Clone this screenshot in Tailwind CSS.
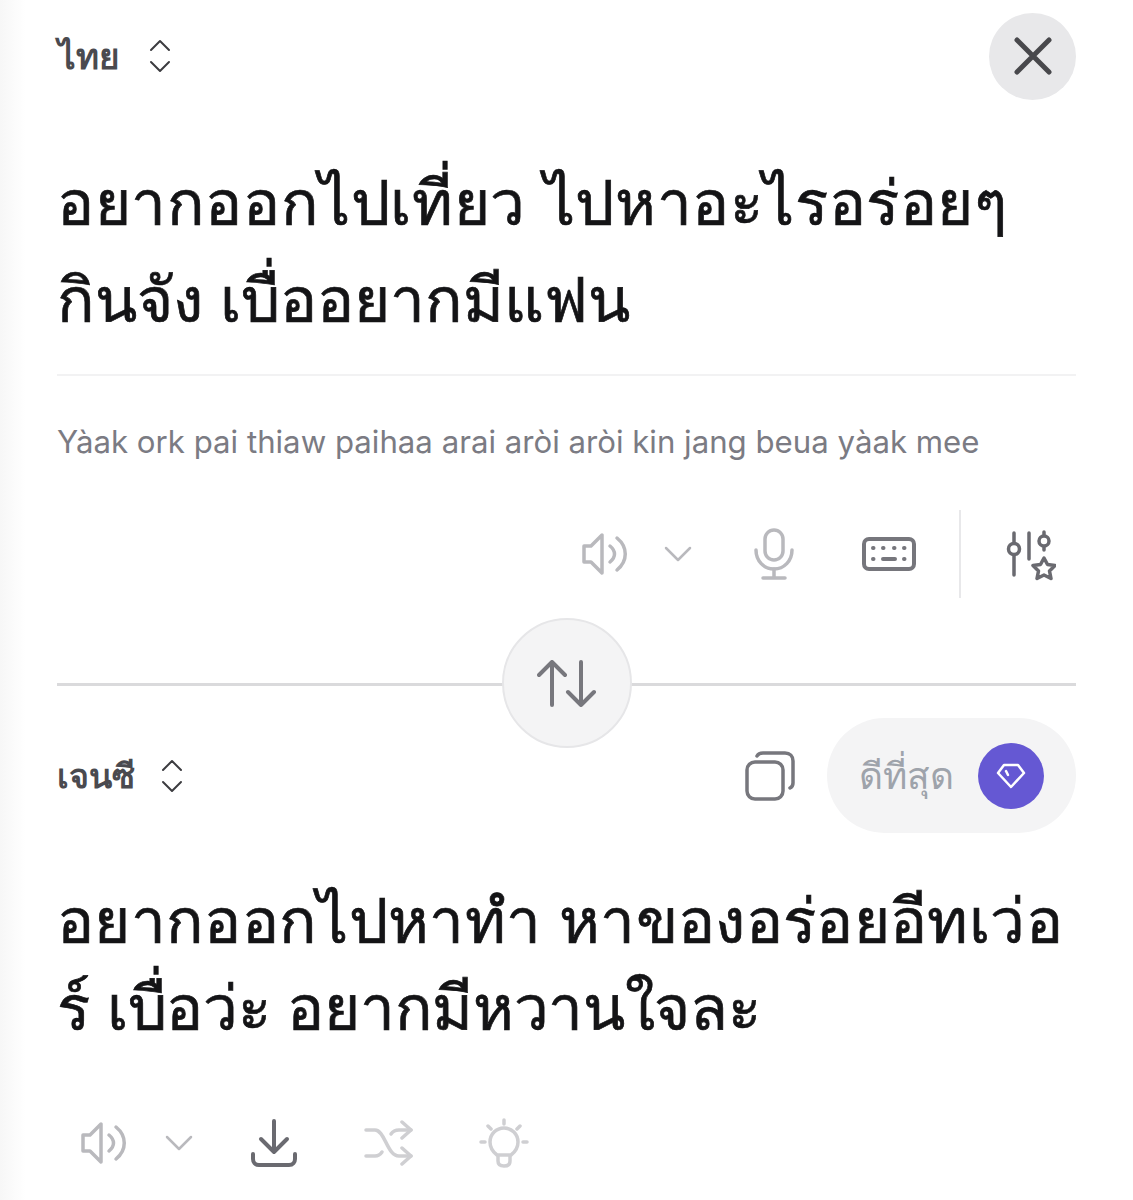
<!DOCTYPE html>
<html lang="th">
<head>
  <meta charset="UTF-8" />
  <title>Translate</title>
  <script src="https://cdn.jsdelivr.net/npm/@tailwindcss/browser@4"></script>
</head>
<body class="bg-white h-[1200px] overflow-hidden font-['Inter','Noto_Sans','DejaVu_Sans',sans-serif]">
<div class="h-[1200px] pl-[57px] pr-[57px] bg-gradient-to-r from-[#f7f7f7] to-white to-[26px]">

  <!-- Source header -->
  <div class="h-[112px] flex items-center justify-between">
    <div class="flex items-center gap-[29px]">
      <span class="ml-[1px] text-[35px] font-bold text-[#4a4a4f]">ไทย</span>
      <svg class="w-[22px] h-[36px] text-[#3c3c40]" viewBox="0 0 22 36" fill="none" stroke="currentColor" stroke-width="2" stroke-linecap="round" stroke-linejoin="round"><path d="M2 12l9-9 9 9"/><path d="M2 24l9 9 9-9"/></svg>
    </div>
    <button class="w-[87px] h-[87px] rounded-full bg-[#e8e8ea] flex items-center justify-center">
      <svg class="w-[38px] h-[38px] text-[#48484c]" viewBox="0 0 38 38" fill="none" stroke="currentColor" stroke-width="5" stroke-linecap="round"><path d="M3 3l32 32M35 3L3 35"/></svg>
    </button>
  </div>

  <!-- Source text -->
  <div class="pt-[42px] h-[264px] border-b-2 border-[#f2f2f3]">
    <p class="text-[62px] leading-[97px] text-[#141416] whitespace-nowrap [-webkit-text-stroke:0.7px_#141416]"><span class="block tracking-[0.6px]">อยากออกไปเที่ยว ไปหาอะไรอร่อยๆ</span><span class="block">กินจัง เบื่ออยากมีแฟน</span></p>
  </div>
  <p class="mt-[46px] text-[31.2px] leading-[40px] text-[#7b7b83] whitespace-nowrap">Yàak ork pai thiaw paihaa arai aròi aròi kin jang beua yàak mee</p>

  <!-- Source toolbar -->
  <div class="mt-[48px] h-[88px] flex items-center justify-end">
    <svg class="w-[46px] h-[46px] text-[#b9b9bd]" viewBox="0 0 46 46" fill="none" stroke="currentColor" stroke-width="3.5" stroke-linecap="round" stroke-linejoin="round"><path d="M21 4v38L10 31H3V15h7z"/><path d="M29 15c6 5 6 11 0 16"/><path d="M36 7c11 9 11 23 0 32"/></svg>
    <svg class="ml-[37px] w-[28px] h-[16px] text-[#b9b9bd]" viewBox="0 0 28 16" fill="none" stroke="currentColor" stroke-width="2.5" stroke-linecap="round" stroke-linejoin="round"><path d="M2 2l12 12L26 2"/></svg>
    <svg class="ml-[62px] w-[40px] h-[52px] text-[#b9b9bd]" viewBox="0 0 40 52" fill="none" stroke="currentColor" stroke-width="3.5" stroke-linecap="round" stroke-linejoin="round"><rect x="11" y="2" width="18" height="30" rx="9"/><path d="M2 22c0 11 8 19 18 19s18-8 18-19"/><path d="M20 41v9M9 50h22"/></svg>
    <svg class="ml-[68px] w-[54px] h-[34px] text-[#76767c]" viewBox="0 0 54 34" fill="none" stroke="currentColor" stroke-width="4" stroke-linecap="round"><rect x="2" y="2" width="50" height="30" rx="5"/><path d="M11 11h.5M21 11h.5M32 11h.5M42 11h.5M11 22h.5M42 22h.5M21 22h12"/></svg>
    <div class="ml-[43px] w-[2px] h-[88px] bg-[#e8e8ea]"></div>
    <svg class="ml-[45px] mr-[20px] w-[50px] h-[54px] text-[#6a6a70]" viewBox="0 0 50 54" fill="none" stroke="currentColor" stroke-width="3.5" stroke-linecap="round" stroke-linejoin="round"><path d="M8 6v10M8 28v20M23 6v26M38 5v3M38 20v3"/><circle cx="8" cy="22" r="5.5"/><circle cx="38" cy="14" r="5"/><path d="M38 31l3.500 6.500 7.500 1-5.500 5.500 1.500 7.500-7-3.500-7 3.500 1.500-7.500-5.500-5.500 7.500-1z"/></svg>
  </div>

  <!-- Swap divider -->
  <div class="relative mt-[85px] h-[3px] bg-[#dadadc]">
    <button class="absolute left-[445px] top-[-65px] w-[130px] h-[130px] rounded-full bg-[#f4f4f5] border-2 border-[#e6e6e8] flex items-center justify-center">
      <svg class="w-[60px] h-[47px] text-[#77777d]" viewBox="0 0 60 47" fill="none" stroke="currentColor" stroke-width="4" stroke-linecap="round" stroke-linejoin="round"><path d="M15 2v43M2 15L15 2l13 13"/><path d="M44 2v43M31 32l13 13 13-13"/></svg>
    </button>
  </div>

  <!-- Target header -->
  <div class="mt-[32px] h-[115px] flex items-center justify-between">
    <div class="flex items-center gap-[26px]">
      <span class="text-[34px] font-bold text-[#4a4a4f]">เจนซี</span>
      <svg class="w-[22px] h-[36px] text-[#3c3c40]" viewBox="0 0 22 36" fill="none" stroke="currentColor" stroke-width="2" stroke-linecap="round" stroke-linejoin="round"><path d="M2 12l9-9 9 9"/><path d="M2 24l9 9 9-9"/></svg>
    </div>
    <div class="flex items-center gap-[32px]">
      <svg class="w-[50px] h-[50px] text-[#77777d]" viewBox="0 0 50 50" fill="none" stroke="currentColor" stroke-width="3.5" stroke-linecap="round" stroke-linejoin="round"><rect x="2" y="11" width="36" height="37" rx="8"/><path d="M12 5c1-2 3-3 6-3h22c5 0 8 3 8 8v22c0 2-1 4-3 5"/></svg>
      <div class="w-[249px] h-[115px] rounded-full bg-[#f4f4f5] flex items-center justify-end pr-[32px] gap-[24px]">
        <span class="text-[37px] font-medium text-[#9ea3ab]">ดีที่สุด</span>
        <span class="w-[66px] h-[66px] rounded-full bg-[#6558d3] flex items-center justify-center">
          <svg class="w-[30px] h-[26px] text-white" viewBox="0 0 30 26" fill="none" stroke="currentColor" stroke-width="2.5" stroke-linecap="round" stroke-linejoin="round"><path d="M8 2h14l6 8-13 14L2 10z"/><path d="M10 8l2 4"/></svg>
        </span>
      </div>
    </div>
  </div>

  <!-- Target text -->
  <p class="mt-[44px] text-[62px] leading-[87px] text-[#141416] whitespace-nowrap [-webkit-text-stroke:0.7px_#141416]"><span class="block tracking-[0.35px]">อยากออกไปหาทำ หาของอร่อยอีทเว่อ</span><span class="block tracking-[-0.3px]">ร์ เบื่อว่ะ อยากมีหวานใจละ</span></p>

  <!-- Target toolbar -->
  <div class="mt-[67px] flex items-center">
    <svg class="ml-[23px] w-[46px] h-[46px] text-[#b9b9bd]" viewBox="0 0 46 46" fill="none" stroke="currentColor" stroke-width="3.5" stroke-linecap="round" stroke-linejoin="round"><path d="M21 4v38L10 31H3V15h7z"/><path d="M29 15c6 5 6 11 0 16"/><path d="M36 7c11 9 11 23 0 32"/></svg>
    <svg class="ml-[39px] w-[28px] h-[16px] text-[#b9b9bd]" viewBox="0 0 28 16" fill="none" stroke="currentColor" stroke-width="2.5" stroke-linecap="round" stroke-linejoin="round"><path d="M2 2l12 12L26 2"/></svg>
    <svg class="ml-[58px] w-[46px] h-[48px] text-[#6a6a70]" viewBox="0 0 46 48" fill="none" stroke="currentColor" stroke-width="4" stroke-linecap="round" stroke-linejoin="round"><path d="M23 2v31M10 20l13 13 13-13"/><path d="M2 35v5c0 3 2 6 6 6h30c4 0 6-3 6-6v-5"/></svg>
    <svg class="ml-[67px] w-[50px] h-[46px] text-[#cfcfd2]" viewBox="0 0 50 46" fill="none" stroke="currentColor" stroke-width="3.5" stroke-linecap="round" stroke-linejoin="round"><path d="M2 10h9c10 0 12 26 24 26h12"/><path d="M2 36h9c3 0 5-1 7-4M27 14c2-3 4-4 8-4h12"/><path d="M38 2l9 8-9 8M38 28l9 8-9 8"/></svg>
    <svg class="ml-[65px] w-[50px] h-[50px] text-[#cfcfd2]" viewBox="0 0 50 50" fill="none" stroke="currentColor" stroke-width="3.5" stroke-linecap="round" stroke-linejoin="round"><path d="M25 2v4M9 8l3 3M41 8l-3 3M2 24h4M44 24h4"/><path d="M18 37c-4-3-7-7-7-13a14 14 0 0 1 28 0c0 6-3 10-7 13z"/><path d="M19 38v5c0 3 2 5 6 5s6-2 6-5v-5"/></svg>
  </div>
</div>
</body>
</html>
